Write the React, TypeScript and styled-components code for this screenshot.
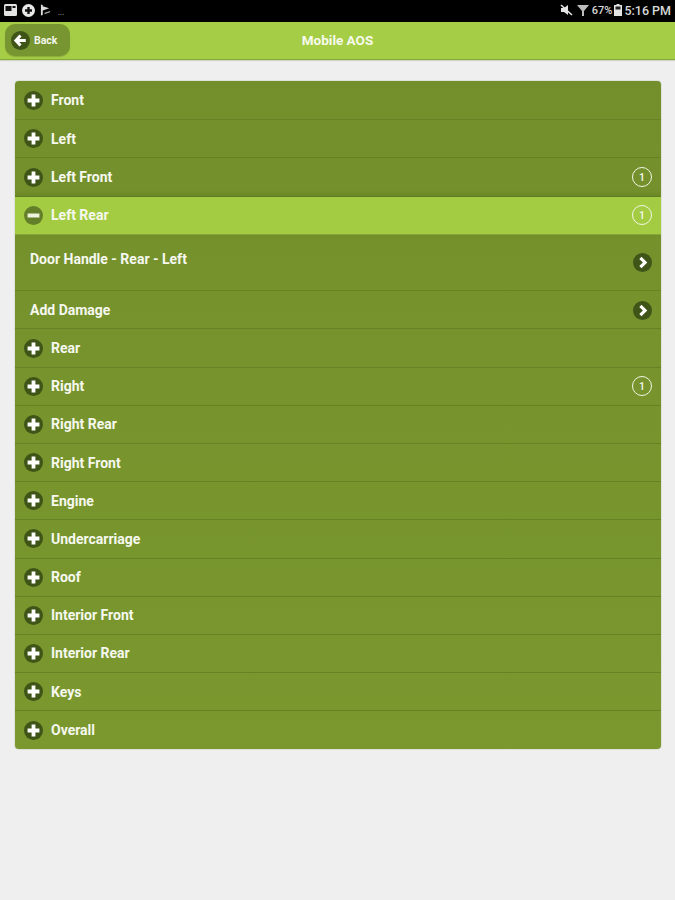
import styled, { createGlobalStyle } from 'styled-components'

const GlobalStyle = createGlobalStyle`
  html, body {
    margin: 0;
    padding: 0;
    background: #efefef;
    font-family: Roboto, "Liberation Sans", sans-serif;
  }
`

const Page = styled.div`
  width: 675px;
  height: 900px;
  overflow: hidden;
  background: #efefef;
`

const StatusBar = styled.div`
  height: 22px;
  background: #000;
  display: flex;
  align-items: center;
  justify-content: space-between;
  padding: 0 4px 2px 4px;
  box-sizing: border-box;
`

const StatusGroup = styled.div<{ $left?: boolean }>`
  display: flex;
  align-items: center;
  gap: ${p => (p.$left ? '5px' : '2px')};
`

const StatusText = styled.span<{ $time?: boolean }>`
  font-size: ${p => (p.$time ? '12.5px' : '11px')};
  font-weight: 500;
  color: #d8d8d8;
  margin-left: ${p => (p.$time ? '0' : '1px')};
`

const Dots = styled.span`
  font-size: 8px;
  line-height: 8px;
  margin: 5px 0 0 2px;
  color: #bbb;
`

const Header = styled.header`
  height: 37px;
  background: #a5cd45;
  border-bottom: 1px solid #86a83a;
  box-shadow: 0 1px 1px rgba(120, 140, 70, 0.25);
  display: flex;
  align-items: center;
  padding: 0 5px;
  position: relative;
`

const BackButton = styled.button`
  width: 65px;
  height: 32px;
  border: 0;
  border-radius: 10px;
  background: #779530;
  box-shadow: 0 1px 1px #8cab3a;
  display: flex;
  align-items: center;
  gap: 4px;
  padding: 0 0 0 6px;
  color: #f3f6ea;
  font: 700 10.5px Roboto, sans-serif;
  margin-top: -1px;
`

const Title = styled.h1`
  position: absolute;
  left: 0;
  right: 0;
  top: 0;
  margin: 0;
  text-align: center;
  font-size: 13.5px;
  line-height: 37px;
  font-weight: 700;
  color: #f7faee;
  pointer-events: none;
`

const Content = styled.main`
  padding: 21px 14px 0 15px;
`

const List = styled.div`
  border-radius: 4px;
  overflow: hidden;
  background: linear-gradient(#738f2c, #7a982e);
  box-shadow: 0 0 1px #55701c;
`

const Row = styled.div<{ $open?: boolean; $tall?: boolean }>`
  height: ${p => (p.$tall ? '56.5px' : '38.18px')};
  box-sizing: border-box;
  display: flex;
  align-items: ${p => (p.$tall ? 'flex-start' : 'center')};
  padding: ${p => (p.$tall ? '16px 9px 0 15px' : '0 9px 0 9px')};
  background: ${p => (p.$open ? '#a3cc42' : 'transparent')};
  border-bottom: 1px solid ${p => (p.$open ? '#86a83a' : '#658224')};
  box-shadow: ${p => (p.$open ? '0 -2px 5px rgba(80, 100, 30, .35)' : 'none')};
  position: relative;
  &:first-child {
    height: 39.3px;
  }
  &:last-child {
    border-bottom: 0;
  }
`

const Label = styled.span`
  flex: 1;
  margin-left: 8px;
  font-size: 14px;
  font-weight: 700;
  color: #f6f8ef;
`

const SubLabel = styled.span<{ $inset?: boolean }>`
  flex: 1;
  padding-left: ${p => (p.$inset ? '6px' : '0')};
  font-size: 14px;
  font-weight: 700;
  color: #f6f8ef;
`

const Count = styled.span`
  width: 20px;
  height: 20px;
  box-sizing: border-box;
  border: 1px solid #f2f6e4;
  border-radius: 50%;
  display: flex;
  align-items: center;
  justify-content: center;
  font-size: 10.5px;
  font-weight: 500;
  color: #f6f8ef;
`

const Chevron = styled.span<{ $drop: number }>`
  display: flex;
  margin-top: ${p => p.$drop}px;
`

const RoundSvg = styled.svg`
  flex-shrink: 0;
`

function RoundIcon({ kind, dim }: { kind: 'plus' | 'minus' | 'back' | 'next'; dim?: boolean }) {
  const bg = dim ? '#647f2a' : '#3f5417'
  return (
    <RoundSvg width="19" height="19" viewBox="0 0 18 18">
      <circle cx="9" cy="9" r="9" fill={bg} />
      {kind === 'plus' && <path d="M9 3.4v11.2M3.4 9h11.2" stroke="#fff" strokeWidth="3.6" />}
      {kind === 'minus' && <path d="M3.4 9h11.2" stroke="#eef3dd" strokeWidth="3.6" />}
      {kind === 'back' && (
        <path d="M9 4.2 4.6 9 9 13.8M5 9h9" fill="none" stroke="#fff" strokeWidth="2.8" />
      )}
      {kind === 'next' && <path d="M7 4.6 11.4 9 7 13.4" fill="none" stroke="#fff" strokeWidth="3" />}
    </RoundSvg>
  )
}

function PictureIcon() {
  return (
    <svg width="13" height="12" viewBox="0 0 13 12">
      <rect width="13" height="12" rx="1.5" fill="#e4e4e4" />
      <rect x="1.5" y="2" width="6" height="5" fill="#111" />
      <rect x="8.5" y="2" width="3" height="2" fill="#111" />
    </svg>
  )
}

function BadgeIcon() {
  return (
    <svg width="13" height="13" viewBox="0 0 13 13">
      <circle cx="6.5" cy="6.5" r="6.5" fill="#e8e8e8" />
      <path d="M6.5 3v7M3 6.5h7" stroke="#111" strokeWidth="2.4" />
    </svg>
  )
}

function FlagIcon() {
  return (
    <svg width="11" height="12" viewBox="0 0 12 12">
      <path d="M1 0v12l2-.5V6.5L10 4 3 2V.5z" fill="#ddd" />
      <path d="M5 9l6-2v1.4L5 10.5z" fill="#aaa" />
    </svg>
  )
}

function MuteIcon() {
  return (
    <svg width="15" height="12" viewBox="0 0 15 12">
      <path d="M1 4h3l4-3v10L4 8H1z" fill="#e4e4e4" />
      <path d="M1 1l11 10" stroke="#e4e4e4" strokeWidth="1.6" />
    </svg>
  )
}

function WifiIcon() {
  return (
    <svg width="12" height="12" viewBox="0 0 12 12">
      <path d="M0 1h12L7 7v5H5V7z" fill="#bdbdbd" />
    </svg>
  )
}

function BatteryIcon() {
  return (
    <svg width="8" height="12" viewBox="0 0 8 12">
      <path d="M2.5 0h3v1H8v11H0V1h2.5z" fill="#e4e4e4" />
      <rect x="1.5" y="2.5" width="5" height="3" fill="#222" />
    </svg>
  )
}

type Section = { name: string; count?: boolean; open?: boolean }

const before: Section[] = [
  { name: 'Front' },
  { name: 'Left' },
  { name: 'Left Front', count: true },
  { name: 'Left Rear', count: true, open: true },
]

const after: Section[] = [
  { name: 'Rear' },
  { name: 'Right', count: true },
  { name: 'Right Rear' },
  { name: 'Right Front' },
  { name: 'Engine' },
  { name: 'Undercarriage' },
  { name: 'Roof' },
  { name: 'Interior Front' },
  { name: 'Interior Rear' },
  { name: 'Keys' },
  { name: 'Overall' },
]

function SectionRow({ name, count, open }: Section) {
  return (
    <Row $open={open}>
      <RoundIcon kind={open ? 'minus' : 'plus'} dim={open} />
      <Label>{name}</Label>
      {count && <Count>1</Count>}
    </Row>
  )
}

export default function App() {
  return (
    <Page>
      <GlobalStyle />
      <StatusBar>
        <StatusGroup $left>
          <PictureIcon />
          <BadgeIcon />
          <FlagIcon />
          <Dots>...</Dots>
        </StatusGroup>
        <StatusGroup>
          <MuteIcon />
          <WifiIcon />
          <StatusText>67%</StatusText>
          <BatteryIcon />
          <StatusText $time>5:16 PM</StatusText>
        </StatusGroup>
      </StatusBar>
      <Header>
        <BackButton>
          <RoundIcon kind="back" />
          Back
        </BackButton>
        <Title>Mobile AOS</Title>
      </Header>
      <Content>
        <List>
          {before.map(s => (
            <SectionRow key={s.name} {...s} />
          ))}
          <Row $tall>
            <SubLabel>Door Handle - Rear - Left</SubLabel>
            <Chevron $drop={2}>
              <RoundIcon kind="next" />
            </Chevron>
          </Row>
          <Row>
            <SubLabel $inset>Add Damage</SubLabel>
            <Chevron $drop={1}>
              <RoundIcon kind="next" />
            </Chevron>
          </Row>
          {after.map(s => (
            <SectionRow key={s.name} {...s} />
          ))}
        </List>
      </Content>
    </Page>
  )
}
